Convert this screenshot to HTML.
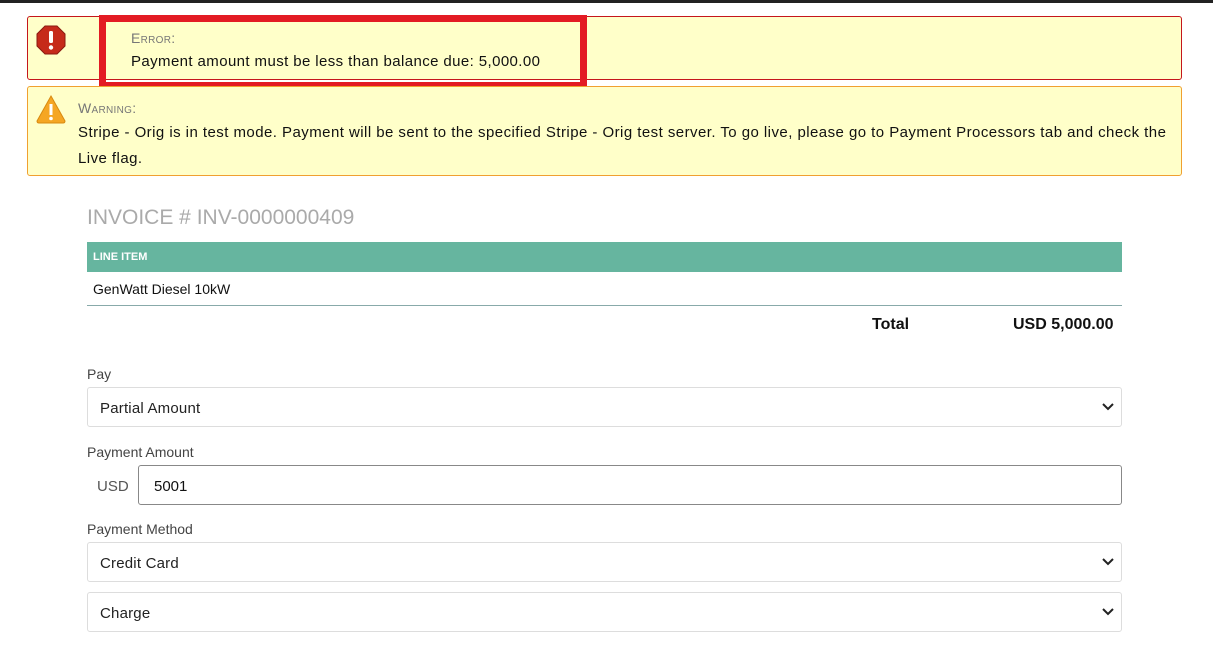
<!DOCTYPE html>
<html><head><style>
*{box-sizing:border-box;margin:0;padding:0}
body{width:1213px;height:655px;overflow:hidden;background:#fff;font-family:"Liberation Sans",sans-serif;color:#111;position:relative;font-size:15px}
.top{position:absolute;left:0;top:0;width:1213px;height:3px;background:#222}
.box{position:absolute;left:27px;width:1155px;background:#ffffc9;border-radius:3px}
.err{top:16px;height:64px;border:1px solid #c5161c}
.warn{top:86px;height:90px;border:1px solid #f0a030}
.lab{font-variant:small-caps;color:#777;font-size:14px;letter-spacing:.3px}
.hl{position:absolute;left:99px;top:15px;width:488px;height:74px;border:7px solid #e31b23}
.abs{position:absolute}
.sel{position:absolute;left:87px;width:1035px;height:40px;border:1px solid #ddd;border-radius:3px;padding:2px 12px 0;line-height:38px;font-size:15px;color:#222;letter-spacing:.2px}
.sel svg{position:absolute;right:7px;top:14px}
.fl{position:absolute;left:87px;font-size:14px;color:#444}
</style></head><body>
<div class="top"></div>
<div class="box err"></div>
<svg class="abs" style="left:36px;top:25px" width="30" height="30" viewBox="0 0 30 30"><polygon points="9,1 21,1 29,9 29,21 21,29 9,29 1,21 1,9" fill="#c62a1a" stroke="#8a1a10"/><rect x="13" y="6" width="4" height="12" rx="1.5" fill="#fff"/><circle cx="15" cy="22.5" r="2.2" fill="#fff"/></svg>
<div class="abs lab" style="left:131px;top:30px">Error:</div>
<div class="abs" style="left:131px;top:53px;letter-spacing:.4px">Payment amount must be less than balance due: 5,000.00</div>
<div class="hl"></div>
<div class="box warn"></div>
<svg class="abs" style="left:35px;top:94px" width="32" height="30" viewBox="0 0 32 30"><path d="M16 2 L30 27 Q30 29 28 29 L4 29 Q2 29 2 27 Z" fill="#f5a623" stroke="#d88a10"/><rect x="14.5" y="10" width="3" height="11" fill="#fff"/><circle cx="16" cy="24.5" r="1.8" fill="#fff"/></svg>
<div class="abs lab" style="left:78px;top:100px">Warning:</div>
<div class="abs" style="left:78px;top:120px;width:1100px;line-height:26px;letter-spacing:.45px">Stripe - Orig is in test mode. Payment will be sent to the specified Stripe - Orig test server. To go live, please go to Payment Processors tab and check the Live flag.</div>
<div class="abs" style="left:87px;top:206px;font-size:21px;color:#aaa">INVOICE # INV-0000000409</div>
<div class="abs" style="left:87px;top:242px;width:1035px;height:30px;background:#66b59f;color:#fff;font-size:11px;font-weight:bold;padding-left:6px;line-height:30px">LINE ITEM</div>
<div class="abs" style="left:93px;top:281px;font-size:14px">GenWatt Diesel 10kW</div>
<div class="abs" style="left:87px;top:305px;width:1035px;height:1px;background:#8aa"></div>
<div class="abs" style="left:872px;top:316px;font-weight:bold;font-size:16px">Total</div>
<div class="abs" style="left:1013px;top:316px;font-weight:bold;font-size:16px">USD 5,000.00</div>
<div class="fl" style="top:366px">Pay</div>
<div class="sel" style="top:387px">Partial Amount<svg width="12" height="10"><path d="M1 2 L6 7 L11 2" stroke="#222" stroke-width="2" fill="none"/></svg></div>
<div class="fl" style="top:444px">Payment Amount</div>
<div class="abs" style="left:97px;top:478px;font-size:15px;color:#555">USD</div>
<div class="abs" style="left:138px;top:465px;width:984px;height:40px;border:1px solid #888;border-radius:3px;padding:2px 0 0 15px;line-height:38px">5001</div>
<div class="fl" style="top:521px">Payment Method</div>
<div class="sel" style="top:542px">Credit Card<svg width="12" height="10"><path d="M1 2 L6 7 L11 2" stroke="#222" stroke-width="2" fill="none"/></svg></div>
<div class="sel" style="top:592px">Charge<svg width="12" height="10"><path d="M1 2 L6 7 L11 2" stroke="#222" stroke-width="2" fill="none"/></svg></div>
</body></html>
